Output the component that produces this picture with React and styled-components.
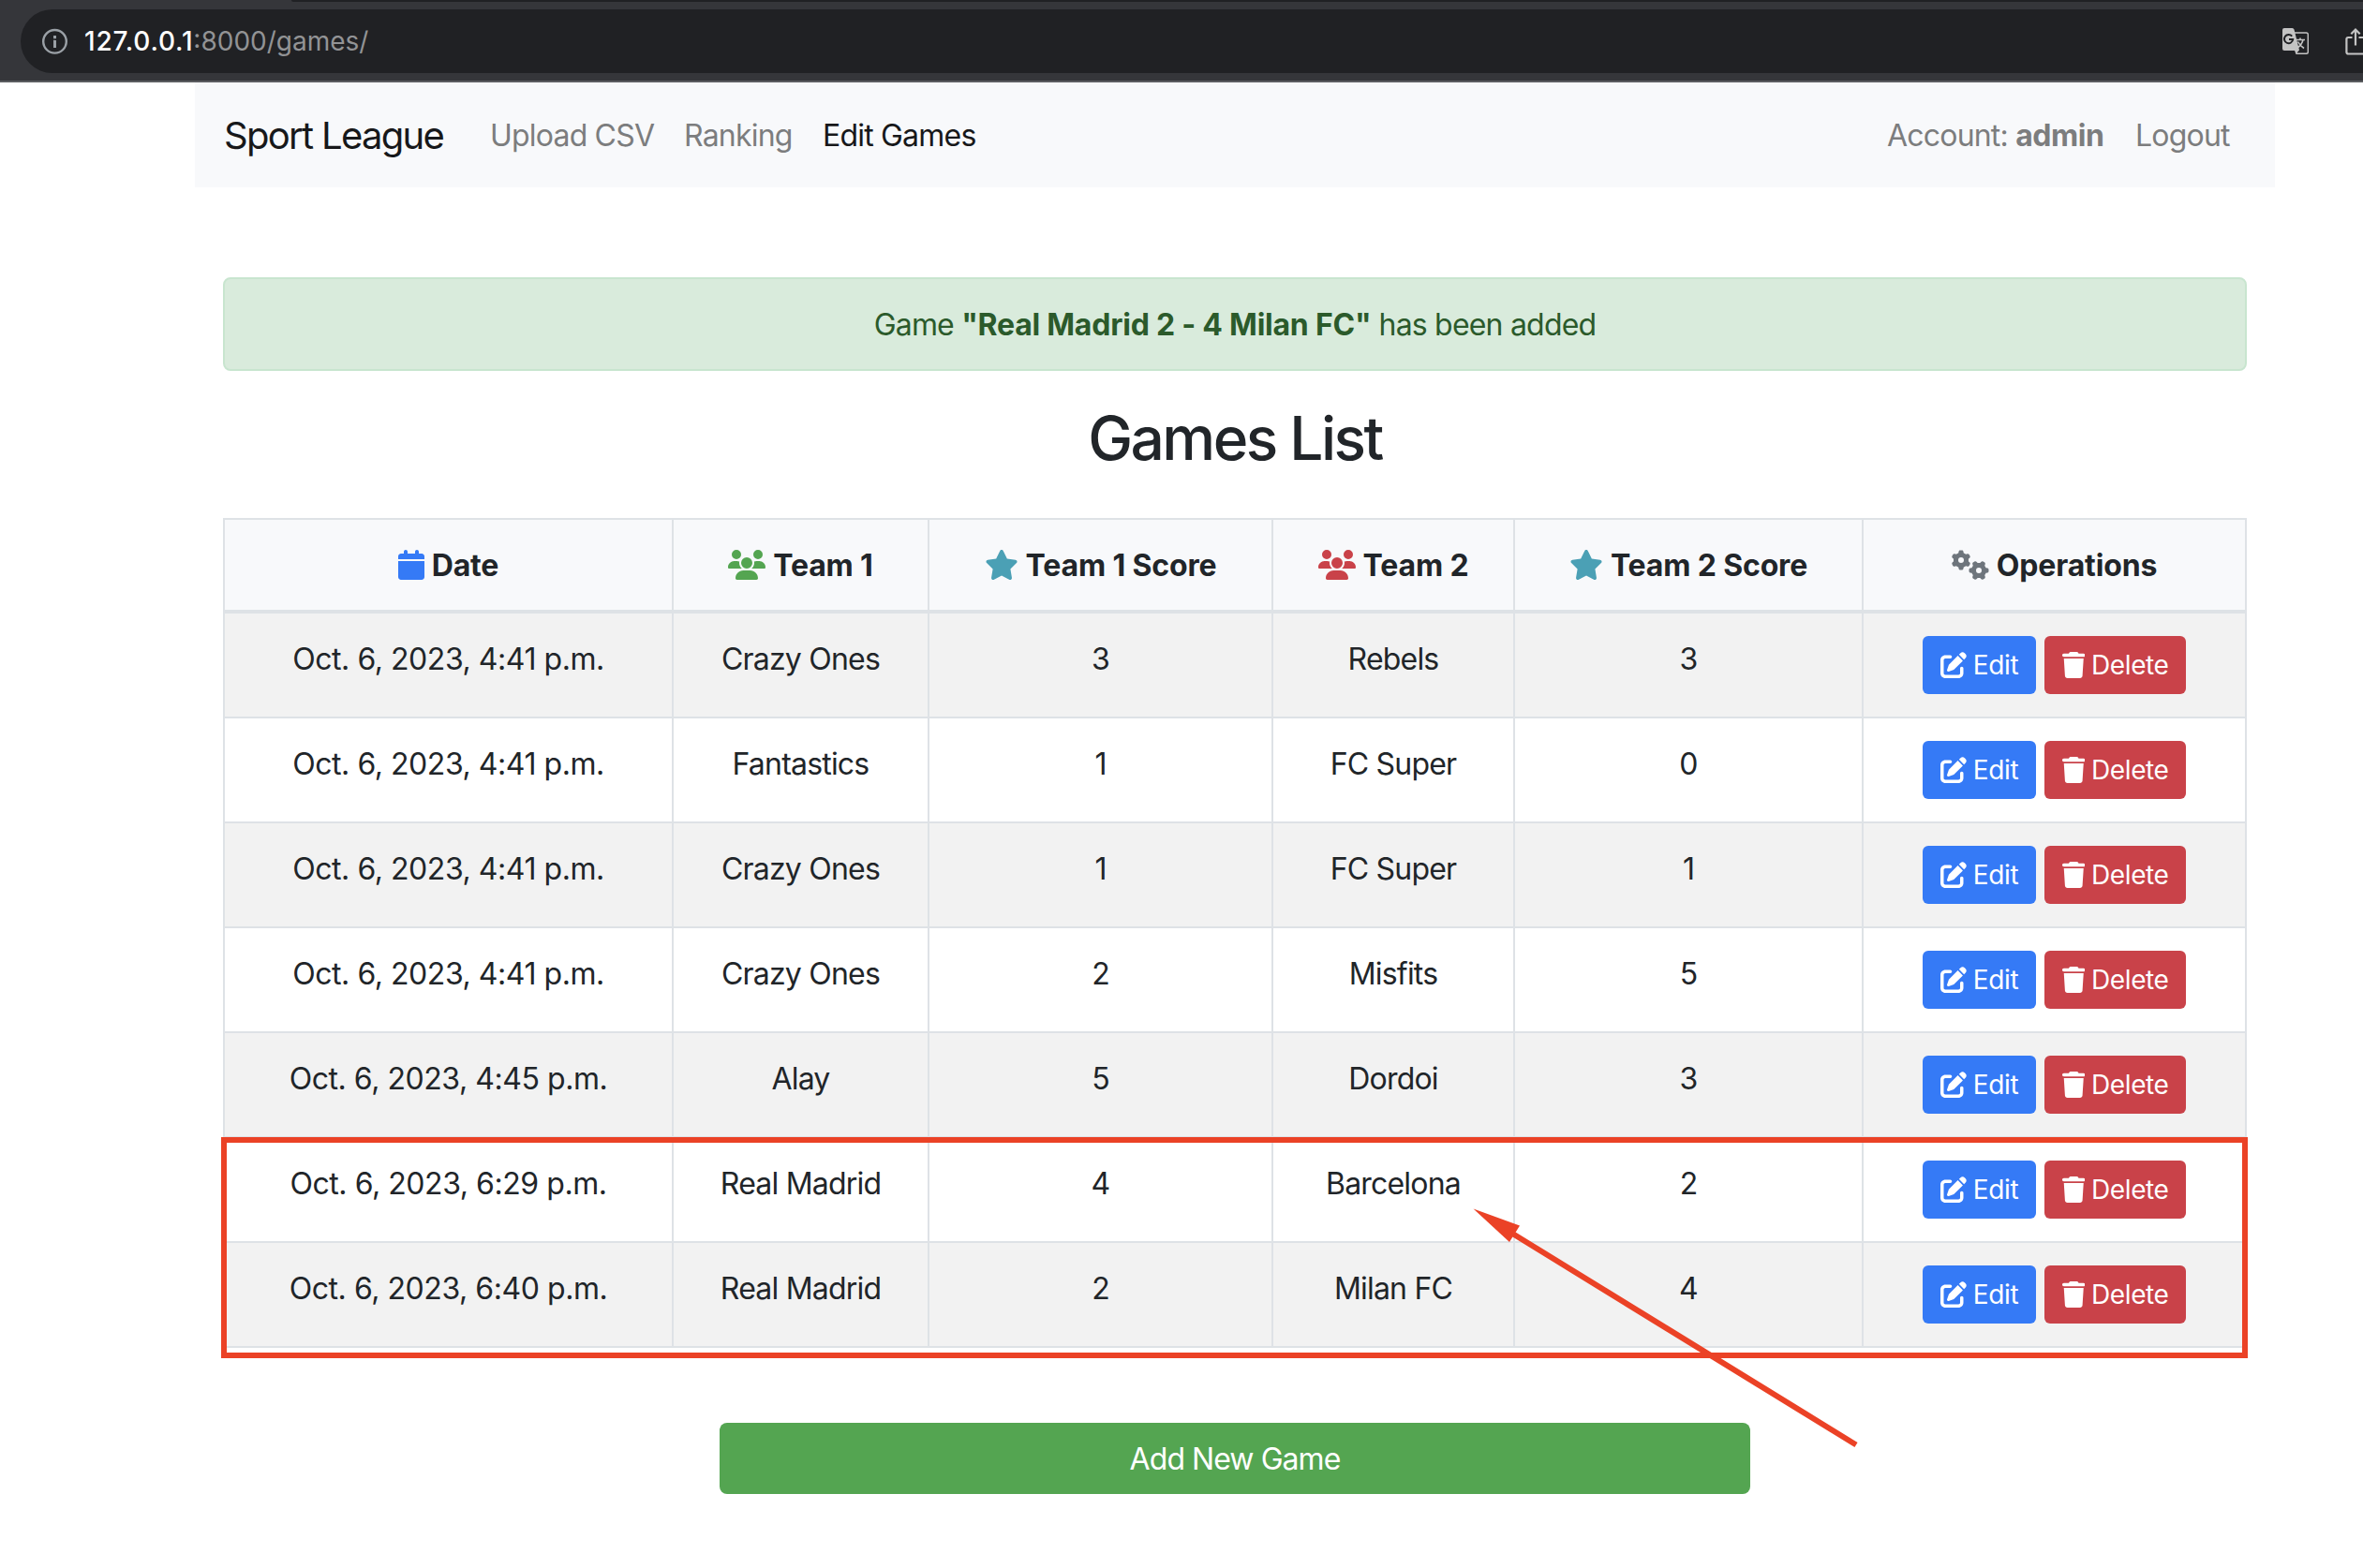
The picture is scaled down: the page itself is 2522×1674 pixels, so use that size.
import React from 'react';
import styled, { createGlobalStyle, css } from 'styled-components';
import { FaCalendar, FaUsers, FaStar, FaGears, FaPenToSquare, FaTrash } from 'react-icons/fa6';

const Global = createGlobalStyle`
  *, *::before, *::after { box-sizing: border-box; }
  body { margin: 0; background: #fff; color: #212529; font: 400 32px/48px Inter, "Liberation Sans", sans-serif; overflow: hidden; }
  button { font: inherit; border: 0; }
`;

const BrowserBar = styled.header`
  position: relative;
  height: 88px;
  padding: 10px 0 8px 22px;
  background: #35363a;
  border-bottom: 2px solid #5b5c60;
  &::before {
    content: '';
    position: absolute;
    top: 0;
    left: 311px;
    right: 0;
    height: 2px;
    border-radius: 0 0 0 4px;
    background: #202124;
  }
`;

const AddressBox = styled.div`
  display: flex;
  align-items: center;
  height: 68px;
  padding-left: 22px;
  border-radius: 34px 0 0 34px;
  background: #202124;
  overflow: hidden;
`;

const Url = styled.span`
  margin-left: 18px;
  font-size: 28px;
  line-height: 34px;
  color: #929395;
  white-space: nowrap;
  b { font-weight: 500; color: #fff; letter-spacing: 0.8px; }
`;

const BarIcons = styled.div`
  display: flex;
  align-items: center;
  gap: 39px;
  margin-left: auto;
  margin-right: -3px;
  svg { display: block; flex: none; }
`;

const Container = styled.div`
  width: 2220px;
  margin-left: 208px;
`;

const Navbar = styled.nav`
  display: flex;
  align-items: center;
  height: 112px;
  padding: 2px 48px 0 31px;
  background: #f8f9fb;
`;

const navText = css`
  white-space: nowrap;
  flex: none;
`;

const Brand = styled.a`
  ${navText}
  width: 235px;
  font-size: 40px;
  letter-spacing: -1.7px;
  color: #17181a;
  margin-right: 49px;
`;

const NavLink = styled.a`
  ${navText}
  width: ${(p) => p.$w}px;
  margin-right: ${(p) => (p.$last ? 0 : 32)}px;
  margin-left: ${(p) => (p.$push ? 'auto' : 0)};
  letter-spacing: -0.8px;
  color: ${(p) => (p.$active ? '#17181a' : '#7c7d7e')};
  b { font-weight: 700; letter-spacing: -0.45px; }
`;

const Content = styled.main`
  padding: 96px 30px 0;
`;

const Alert = styled.div`
  height: 100px;
  padding: 25px 24px 21px;
  border: 2px solid #c8e5cf;
  border-radius: 8px;
  background: #d9ebdc;
  color: #2b5a2b;
  text-align: center;
  letter-spacing: -0.8px;
  b { font-weight: 700; letter-spacing: -0.23px; }
`;

const Heading = styled.h2`
  margin: 33px 0 47px;
  font-size: 64px;
  font-weight: 550;
  line-height: 77px;
  text-align: center;
  letter-spacing: -2.5px;
`;

const TableWrap = styled.div`
  position: relative;
`;

const Table = styled.table`
  width: 2160px;
  table-layout: fixed;
  border-collapse: separate;
  border-spacing: 0;
  border-left: 2px solid #dee2e6;
`;

const Th = styled.th`
  height: 102px;
  padding: 0;
  border: solid #dee2e6;
  border-width: 2px 2px 4px 0;
  background: #f8f9fb;
  font-weight: 700;
  letter-spacing: -0.15px;
`;

const HeadLabel = styled.div`
  display: flex;
  align-items: center;
  justify-content: center;
  gap: 8px;
  height: 48px;
  white-space: nowrap;
  svg {
    flex: none;
    width: ${(p) => p.$iconWidth}px;
    height: 32px;
    color: ${(p) => p.$color};
  }
  span { padding-top: 2px; }
`;

const Row = styled.tr`
  background: ${(p) => (p.$striped ? '#f2f2f2' : '#fff')};
`;

const Td = styled.td`
  height: 112px;
  padding: ${(p) => (p.$actions ? 24 : 25)}px 0 0;
  border: solid #dee2e6;
  border-width: 0 2px 2px 0;
  text-align: center;
  vertical-align: top;
  letter-spacing: ${(p) => (p.$date ? -0.45 : -0.8)}px;
  white-space: nowrap;
`;

const Actions = styled.div`
  display: flex;
  justify-content: center;
  gap: 9px;
`;

const ActionButton = styled.button`
  display: flex;
  align-items: center;
  justify-content: center;
  gap: 7px;
  width: ${(p) => p.$w}px;
  height: 62px;
  padding: 0;
  border-radius: 6px;
  background: ${(p) => p.$bg};
  color: #fff;
  font-size: 28px;
  letter-spacing: -0.4px;
  svg { flex: none; width: ${(p) => p.$iconWidth}px; height: 28px; }
`;

const AddButton = styled.button`
  display: block;
  width: 1100px;
  height: 76px;
  margin: 80px auto 0;
  padding: 2px 0 0;
  border-radius: 8px;
  background: #54a551;
  color: #fff;
  letter-spacing: -0.95px;
`;

const Highlight = styled.div`
  position: absolute;
  left: -2px;
  top: 661px;
  width: 2163px;
  height: 236px;
  border: 6px solid #eb4226;
`;

const Arrow = styled.svg`
  position: absolute;
  left: 1322px;
  top: 727px;
  overflow: visible;
`;

const columns = [
  { label: 'Date', icon: FaCalendar, color: '#357af6', w: 479, iw: 28 },
  { label: 'Team 1', icon: FaUsers, color: '#54a551', w: 273, iw: 40 },
  { label: 'Team 1 Score', icon: FaStar, color: '#4ba0b5', w: 367, iw: 36 },
  { label: 'Team 2', icon: FaUsers, color: '#c94249', w: 258, iw: 40 },
  { label: 'Team 2 Score', icon: FaStar, color: '#4ba0b5', w: 372, iw: 36 },
  { label: 'Operations', icon: FaGears, color: '#6e757c', w: 409, iw: 40 },
];

const games = [
  ['Oct. 6, 2023, 4:41 p.m.', 'Crazy Ones', 3, 'Rebels', 3],
  ['Oct. 6, 2023, 4:41 p.m.', 'Fantastics', 1, 'FC Super', 0],
  ['Oct. 6, 2023, 4:41 p.m.', 'Crazy Ones', 1, 'FC Super', 1],
  ['Oct. 6, 2023, 4:41 p.m.', 'Crazy Ones', 2, 'Misfits', 5],
  ['Oct. 6, 2023, 4:45 p.m.', 'Alay', 5, 'Dordoi', 3],
  ['Oct. 6, 2023, 6:29 p.m.', 'Real Madrid', 4, 'Barcelona', 2],
  ['Oct. 6, 2023, 6:40 p.m.', 'Real Madrid', 2, 'Milan FC', 4],
];

const InfoIcon = () => (
  <svg width="28" height="28" viewBox="0 0 28 28" fill="none" stroke="#9aa0a6">
    <circle cx="14.5" cy="14.3" r="12.3" strokeWidth="2.4" />
    <path d="M14.500 8V11.200M14.500 13V21M13 14.200H14.500" strokeWidth="3" />
  </svg>
);

const TranslateIcon = () => (
  <svg width="28" height="28" viewBox="0 0 28 28" fill="none">
    <path d="M13 5H25.500Q27.300 5 27.300 6.800V25.500Q27.300 27.300 25.500 27.300H15L13.500 23" stroke="#c4c4c4" strokeWidth="1.4" />
    <path d="M2 0H10.500Q12 0 12.500 1.500L18 23.500L14.500 27.500L13.800 24H2Q0 24 0 22V2Q0 0 2 0Z" fill="#c4c4c4" />
    <path d="M10.200 8.700A4.600 4.600 0 1 0 11.200 12H7" stroke="#202124" strokeWidth="2" />
    <path d="M14.500 12.500H24M19 10.500V12.500M22 12.500Q21 17.500 15.500 21.500M16.500 14.500Q18.500 18.500 23 21.500" stroke="#c4c4c4" strokeWidth="1.6" />
  </svg>
);

const ShareIcon = () => (
  <svg width="22" height="30" viewBox="0 0 22 30" fill="none" stroke="#c4c4c4" strokeWidth="2.2">
    <path d="M7.500 11H3.200Q1.400 11 1.400 12.800V26.500Q1.400 28.500 3.400 28.500H18.600Q20.600 28.500 20.600 26.500V12.800Q20.600 11 18.800 11H14.500" />
    <path d="M11 19.500V3M6.300 7.200L11 2.500L15.700 7.200" />
  </svg>
);

export default function App() {
  return (
    <>
      <Global />
      <BrowserBar>
        <AddressBox>
          <InfoIcon />
          <Url><b>127.0.0.1</b>:8000/games/</Url>
          <BarIcons>
            <TranslateIcon />
            <ShareIcon />
          </BarIcons>
        </AddressBox>
      </BrowserBar>
      <Container>
        <Navbar>
          <Brand>Sport League</Brand>
          <NavLink $w={175}>Upload CSV</NavLink>
          <NavLink $w={116}>Ranking</NavLink>
          <NavLink $w={166} $active>Edit Games</NavLink>
          <NavLink $w={233} $push>Account: <b>admin</b></NavLink>
          <NavLink $w={101} $last>Logout</NavLink>
        </Navbar>
        <Content>
          <Alert>Game <b>"Real Madrid 2 - 4 Milan FC"</b> has been added</Alert>
          <Heading>Games List</Heading>
          <TableWrap>
            <Table>
              <colgroup>{columns.map((c) => <col key={c.label} width={c.w} />)}</colgroup>
              <thead>
                <tr>
                  {columns.map(({ label, icon: Icon, color, iw }) => (
                    <Th key={label}>
                      <HeadLabel $color={color} $iconWidth={iw}><Icon /><span>{label}</span></HeadLabel>
                    </Th>
                  ))}
                </tr>
              </thead>
              <tbody>
                {games.map((game, i) => (
                  <Row key={i} $striped={i % 2 === 0}>
                    {game.map((value, j) => <Td key={j} $date={j === 0}>{value}</Td>)}
                    <Td $actions>
                      <Actions>
                        <ActionButton $w={121} $iconWidth={28} $bg="#357af6"><FaPenToSquare />Edit</ActionButton>
                        <ActionButton $w={151} $iconWidth={24.5} $bg="#c94249"><FaTrash />Delete</ActionButton>
                      </Actions>
                    </Td>
                  </Row>
                ))}
              </tbody>
            </Table>
            <Highlight />
            <Arrow width="424" height="270" viewBox="0 0 424 270">
              <path d="M30 22L421 262.5" stroke="#eb4226" strokeWidth="6" />
              <path d="M12.500 10.500L62 28.500L51 46Z" fill="#eb4226" />
            </Arrow>
          </TableWrap>
          <AddButton>Add New Game</AddButton>
        </Content>
      </Container>
    </>
  );
}
